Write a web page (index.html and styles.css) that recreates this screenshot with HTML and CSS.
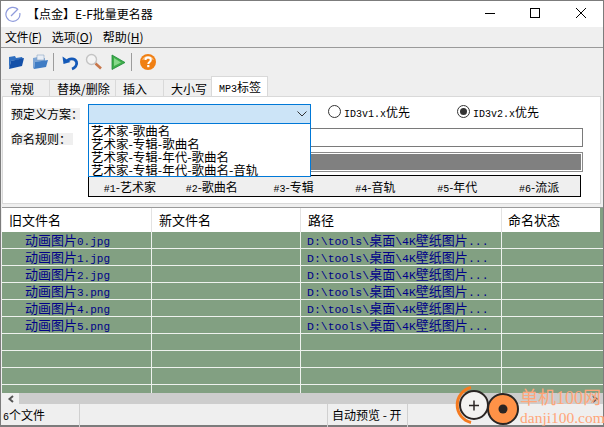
FILE: index.html
```html
<!DOCTYPE html>
<html lang="zh-CN">
<head>
    <meta charset="UTF-8">
    <title>【点金】E-F批量更名器</title>
    <link rel="stylesheet" href="styles.css">
</head>
<body>

<div class="window">
    <div class="titlebar">
        <svg class="app-icon" width="16" height="16" viewBox="0 0 16 16">
            <path d="M13 3.500A7 7 0 1 0 14.800 7" fill="none" stroke="#8f9bdc" stroke-width="1.200"/>
            <path d="M6 10L13 3" stroke="#8f9bdc" stroke-width="1.200"/>
        </svg>
        <span class="title-text">【点金】E-F批量更名器</span>
        <div class="win-buttons">
            <svg class="btn-min" width="12" height="12" viewBox="0 0 12 12"><path d="M1 6.500H11" stroke="#000"/></svg>
            <svg width="12" height="12" viewBox="0 0 12 12"><rect x="1.500" y="1.500" width="9" height="9" fill="none" stroke="#000"/></svg>
            <svg width="12" height="12" viewBox="0 0 12 12"><path d="M1 1L11 11M11 1L1 11" stroke="#000"/></svg>
        </div>
    </div>

    <div class="menubar">
        <span class="menu-first">文件(<u>F</u>)</span>
        <span>选项(<u>O</u>)</span>
        <span>帮助(<u>H</u>)</span>
    </div>

    <div class="toolbar">
        <svg class="tool" width="18" height="18" viewBox="0 0 18 18">
            <path d="M2 4L8 3L9 5L15 4L16 6L4 8L2 16Z" fill="#2f6fc0"/>
            <path d="M4 8L17 5L15 13L2 16Z" fill="#1450a8"/>
        </svg>
        <svg class="tool" width="18" height="18" viewBox="0 0 18 18">
            <path d="M2 5L7 4L8 6L14 5V8L4 9L3 16L2 15Z" fill="#7ea6d6"/>
            <path d="M6 2H13V7H6Z" fill="#e8eef6" stroke="#8aa4c4" stroke-width=".6"/>
            <path d="M4 9L17 7L15 14L3 16Z" fill="#3f7cc4"/>
        </svg>
        <i class="tool-sep"></i>
        <svg class="tool" width="18" height="18" viewBox="0 0 18 18">
            <path d="M6 8.500C8 5 14 5 15.500 9C16.500 12 14 15 11 16" fill="none" stroke="#1459b8" stroke-width="2.800"/>
            <path d="M1.500 3.500L2.500 11L9.500 9Z" fill="#1459b8"/>
        </svg>
        <svg class="tool" width="18" height="18" viewBox="0 0 18 18">
            <circle cx="6.500" cy="6.500" r="5" fill="#f4f4f4" stroke="#c4c4c4" stroke-width="1.400"/>
            <path d="M10.500 10.500L16 15.500" stroke="#c8764a" stroke-width="2.600"/>
        </svg>
        <svg class="tool" width="18" height="18" viewBox="0 0 18 18">
            <path d="M3 2L16 9.500L3 16.500Z" fill="#3fae4a" stroke="#1d8a38" stroke-width=".8"/>
            <path d="M5 5L12 9.500L5 13Z" fill="#86d889"/>
        </svg>
        <i class="tool-sep"></i>
        <svg class="tool" width="18" height="18" viewBox="0 0 18 18">
            <circle cx="9" cy="9" r="8" fill="#f07f13"/>
            <path d="M3 7A6.500 6.500 0 0 1 15 7C11 5.500 7 5.500 3 7Z" fill="#f9bb78"/>
            <path d="M6.500 7C6.500 3.800 11.800 3.800 11.800 7C11.800 9 9.300 9 9.300 11" fill="none" stroke="#fff" stroke-width="2"/>
            <rect x="8.200" y="12" width="2.200" height="2.200" fill="#fff"/>
        </svg>
    </div>

    <div class="tabs">
        <span class="tab tab-a">常规</span>
        <span class="tab tab-b">替换/删除</span>
        <span class="tab tab-c">插入</span>
        <span class="tab tab-c">大小写</span>
        <span class="tab tab-active"><span class="lat">MP3</span>标签</span>
    </div>

    <div class="panel">
        <div class="form-row row-scheme">
            <label class="field-label">预定义方案：</label>
            <div class="combo">
                <svg width="10" height="6" viewBox="0 0 10 6"><path d="M0.500 0.500L5 5L9.500 0.500" fill="none" stroke="#333"/></svg>
            </div>
            <div class="radio-item radio-one"><i class="radio"></i><span><span class="lat">ID3v1.x</span>优先</span></div>
            <div class="radio-item radio-two"><i class="radio checked"></i><span><span class="lat">ID3v2.x</span>优先</span></div>
            <ul class="drop-list">
                <li>艺术家-歌曲名</li>
                <li>艺术家-专辑-歌曲名</li>
                <li>艺术家-专辑-年代-歌曲名</li>
                <li>艺术家-专辑-年代-歌曲名-音轨</li>
            </ul>
        </div>
        <div class="form-row row-rule">
            <label class="field-label">命名规则：</label>
            <div class="rule-box"></div>
        </div>
        <div class="preview-bar"><div></div></div>
        <div class="tokens">
            <span><span class="lat">#1</span>-艺术家</span>
            <span><span class="lat">#2</span>-歌曲名</span>
            <span><span class="lat">#3</span>-专辑</span>
            <span><span class="lat">#4</span>-音轨</span>
            <span><span class="lat">#5</span>-年代</span>
            <span><span class="lat">#6</span>-流派</span>
        </div>
    </div>

    <div class="grid">
        <div class="grid-head">
            <span>旧文件名</span>
            <span>新文件名</span>
            <span>路径</span>
            <span>命名状态</span>
        </div>
        <div class="grid-body">
            <div class="grid-row"><span class="name">动画图片<span class="lat">0.jpg</span></span><span></span><span class="path"><span class="lat">D:\tools\</span>桌面<span class="lat">\4K</span>壁纸图片<span class="lat">...</span></span><span></span></div>
            <div class="grid-row"><span class="name">动画图片<span class="lat">1.jpg</span></span><span></span><span class="path"><span class="lat">D:\tools\</span>桌面<span class="lat">\4K</span>壁纸图片<span class="lat">...</span></span><span></span></div>
            <div class="grid-row"><span class="name">动画图片<span class="lat">2.jpg</span></span><span></span><span class="path"><span class="lat">D:\tools\</span>桌面<span class="lat">\4K</span>壁纸图片<span class="lat">...</span></span><span></span></div>
            <div class="grid-row"><span class="name">动画图片<span class="lat">3.png</span></span><span></span><span class="path"><span class="lat">D:\tools\</span>桌面<span class="lat">\4K</span>壁纸图片<span class="lat">...</span></span><span></span></div>
            <div class="grid-row"><span class="name">动画图片<span class="lat">4.png</span></span><span></span><span class="path"><span class="lat">D:\tools\</span>桌面<span class="lat">\4K</span>壁纸图片<span class="lat">...</span></span><span></span></div>
            <div class="grid-row"><span class="name">动画图片<span class="lat">5.png</span></span><span></span><span class="path"><span class="lat">D:\tools\</span>桌面<span class="lat">\4K</span>壁纸图片<span class="lat">...</span></span><span></span></div>
            <div class="grid-row"><span></span><span></span><span></span><span></span></div>
            <div class="grid-row"><span></span><span></span><span></span><span></span></div>
            <div class="grid-row"><span></span><span></span><span></span><span></span></div>
            <div class="grid-row"><span></span><span></span><span></span><span></span></div>
        </div>
    </div>

    <div class="hscroll">
        <div class="scroll-btn">
            <svg width="8" height="8" viewBox="0 0 8 8"><path d="M6 1L2.500 4L6 7" fill="none" stroke="#555" stroke-width="2"/></svg>
        </div>
        <div class="scroll-btn scroll-right">
            <svg width="8" height="8" viewBox="0 0 8 8"><path d="M2 1L5.500 4L2 7" fill="none" stroke="#555" stroke-width="2"/></svg>
        </div>
    </div>

    <div class="statusbar">
        <span class="st-count"><span class="lat">6</span>个文件</span>
        <span class="st-blank"></span>
        <span class="st-auto">自动预览 - 开</span>
    </div>

    <!-- 水印 -->
    <div class="watermark">
        <svg class="wm-logo" width="66" height="44" viewBox="0 0 66 44">
            <path d="M17 2.500A18 18 0 0 0 17 37.500" fill="none" stroke="#f57a1f" stroke-width="3"/>
            <circle cx="20" cy="20" r="14" fill="#f4f2f0" stroke="#2b2523" stroke-width="2"/>
            <path d="M15 20.500H25M20 15.500V25.500" stroke="#2b2523" stroke-width="1.500"/>
            <circle cx="49" cy="24" r="15" fill="#ff9247" stroke="#2b2523" stroke-width="2"/>
            <circle cx="49" cy="24" r="4.500" fill="#2b2523"/>
        </svg>
        <div class="wm-text">
            <div class="wm-cn">单机100网</div>
            <div class="wm-en">danji100.com</div>
        </div>
    </div>
</div>

</body>
</html>
```

FILE: styles.css
```css
* {
    box-sizing: border-box;
}
html, body {
    margin: 0;
    padding: 0;
}
body {
    width: 604px;
    height: 427px;
    overflow: hidden;
    font-family: "Noto Sans CJK SC", "Liberation Sans", sans-serif;
    font-size: 12px;
    color: #000;
}
.lat {
    font-family: "Liberation Mono", monospace;
    font-size: 10px;
}
.window {
    position: relative;
    width: 604px;
    height: 427px;
    background: #efefef;
    border: 1px solid #7c7c7c;
    border-bottom-width: 2px;
    display: flex;
    flex-direction: column;
}

/* 标题栏 */
.titlebar {
    height: 26px;
    flex: none;
    background: #fff;
    display: flex;
    align-items: center;
    padding-left: 4px;
}
.app-icon {
    flex: none;
}
.title-text {
    margin-left: 6px;
    line-height: 26px;
    white-space: nowrap;
}
.win-buttons {
    margin-left: auto;
    margin-right: 16px;
    margin-bottom: 2px;
    display: flex;
    gap: 34px;
}
.btn-min {
    margin-right: -1px;
}

/* 菜单 */
.menubar {
    height: 21px;
    flex: none;
    display: flex;
    gap: 10px;
    padding-left: 4px;
    line-height: 20px;
    border-bottom: 1px solid #9a9a9a;
}
.menu-first {
    letter-spacing: -.4px;
}

/* 工具栏 */
.toolbar {
    height: 28px;
    flex: none;
    display: flex;
    align-items: center;
    padding-left: 6px;
}
.tool {
    flex: none;
    margin-right: 6px;
}
.tool-sep {
    width: 1px;
    height: 18px;
    background: #9c9c9c;
    margin: 0 7px 0 -2px;
}

/* 标签页 */
.tabs {
    height: 20px;
    flex: none;
    display: flex;
    align-items: flex-end;
    padding-left: 1px;
}
.tab {
    height: 17px;
    line-height: 17px;
    padding-left: 8px;
    border-top: 1px solid #d9d9d9;
    border-right: 1px solid #d9d9d9;
    white-space: nowrap;
}
.tab-a {
    width: 48px;
}
.tab-b {
    width: 66px;
    padding-left: 7px;
}
.tab-c {
    width: 48px;
    padding-left: 7px;
}
.tab-active {
    width: 57px;
    height: 20px;
    line-height: 19px;
    padding-left: 7px;
    background: #fff;
    border: 1px solid #d9d9d9;
    border-bottom: 0;
    margin-left: -1px;
}

/* 面板 */
.panel {
    height: 108px;
    flex: none;
    margin: 0 2px 0 1px;
    background: #fff;
    border: 1px solid #d9d9d9;
    padding: 7px 0 0 8px;
}
.form-row {
    position: relative;
    display: flex;
}
.field-label {
    height: 12px;
    line-height: 12px;
    background: #efefef;
    white-space: nowrap;
    flex: none;
}
.row-scheme {
    height: 20px;
}
.row-scheme .field-label {
    width: 69px;
    margin-top: 4px;
}
.combo {
    width: 223px;
    height: 20px;
    flex: none;
    margin-left: 8px;
    background: #cce4f7;
    border: 1px solid #0078d7;
    display: flex;
    align-items: center;
    justify-content: flex-end;
    padding-right: 3px;
}
.radio-item {
    display: flex;
    align-items: center;
    gap: 3px;
    height: 14px;
    white-space: nowrap;
}
.radio-one {
    margin-left: 17px;
}
.radio-two {
    margin-left: 47px;
}
.radio {
    width: 13px;
    height: 13px;
    border: 1px solid #333;
    border-radius: 50%;
    background: #fff;
    position: relative;
    flex: none;
}
.radio.checked::after {
    content: "";
    position: absolute;
    left: 2px;
    top: 2px;
    width: 7px;
    height: 7px;
    border-radius: 50%;
    background: #333;
}
.drop-list {
    position: absolute;
    z-index: 2;
    left: 77px;
    top: 20px;
    width: 223px;
    height: 53px;
    margin: 0;
    padding: 0 0 0 2px;
    list-style: none;
    background: #fff;
    border: 1px solid #0078d7;
    border-top: 0;
    overflow: hidden;
}
.drop-list li {
    height: 13px;
    line-height: 13px;
    font-size: 12.500px;
    white-space: nowrap;
}
.row-rule {
    margin-top: 4px;
    height: 19px;
}
.row-rule .field-label {
    width: 62px;
    margin-top: 5px;
}
.rule-box {
    flex: 1;
    margin: 0 17px 0 15px;
    border: 1px solid #7a7a7a;
    background: #fff;
}
.preview-bar {
    height: 20px;
    margin: 5px 17px 0 77px;
    border: 1px solid #8a8a8a;
    padding: 1px;
    background: #fff;
}
.preview-bar div {
    height: 100%;
    background: #808080;
}
.tokens {
    height: 22px;
    margin: 3px 19px 0 77px;
    border: 1px solid #000;
    background: #efefef;
    display: grid;
    grid-template-columns: repeat(6, 1fr);
    line-height: 21px;
    text-align: center;
    white-space: nowrap;
}

/* 文件列表 */
.grid {
    height: 186px;
    flex: none;
    margin-top: 3px;
    margin-left: 1px;
    border-top: 1px solid #9a9a9a;
    display: flex;
    flex-direction: column;
    overflow: hidden;
}
.grid-head,
.grid-row {
    display: grid;
    grid-template-columns: 150px 149px 201px 1fr;
}
.grid-head {
    height: 24px;
    flex: none;
    background: #fff;
    line-height: 24px;
    font-size: 13px;
}
.grid-head span {
    padding-left: 7px;
    border-right: 1px solid #e3e3e3;
}
.grid-head span:last-child {
    border-right: 3px solid #82a082;
    padding-left: 6px;
}
.grid-row {
    height: 17px;
    background: #82a082;
    border-bottom: 1px solid #eef2ee;
    color: #000088;
    line-height: 16px;
    font-size: 13px;
    white-space: nowrap;
}
.grid-row > span {
    border-right: 1px solid #eef2ee;
}
.grid-row > span:last-child {
    border-right: 0;
}
.grid-row .name {
    padding-left: 23px;
}
.grid-row .name .lat {
    font-size: 11px;
}
.grid-row .path {
    padding-left: 6px;
}
.grid-row .path .lat {
    font-size: 11.500px;
}

/* 滚动条 */
.hscroll {
    height: 11px;
    flex: none;
    margin-left: 1px;
    background: #cdcdcd;
    display: flex;
    justify-content: space-between;
}
.scroll-btn {
    width: 17px;
    background: #f0f0f0;
    display: flex;
    align-items: center;
    justify-content: center;
}
.scroll-right {
    background: #cdcdcd;
}

/* 状态栏 */
.statusbar {
    flex: 1;
    display: flex;
    line-height: 21px;
}
.statusbar span {
    white-space: nowrap;
}
.st-count {
    width: 79px;
    padding-left: 2px;
    border-right: 1px solid #d0d0d0;
}
.st-blank {
    width: 248px;
    border-right: 1px solid #d0d0d0;
}
.st-auto {
    width: 80px;
    padding-left: 4px;
    border-right: 1px solid #d0d0d0;
}

/* 水印 */
.watermark {
    position: absolute;
    left: 453px;
    top: 384px;
    display: flex;
}
.wm-logo {
    flex: none;
}
.wm-text {
    color: #ffa679;
    font-family: "Liberation Serif", "Noto Sans CJK SC", serif;
    white-space: nowrap;
}
.wm-cn {
    font-size: 18px;
    line-height: 20px;
    margin-top: 3px;
}
.wm-en {
    font-size: 15.500px;
    line-height: 17px;
    margin-top: 1px;
}
```
